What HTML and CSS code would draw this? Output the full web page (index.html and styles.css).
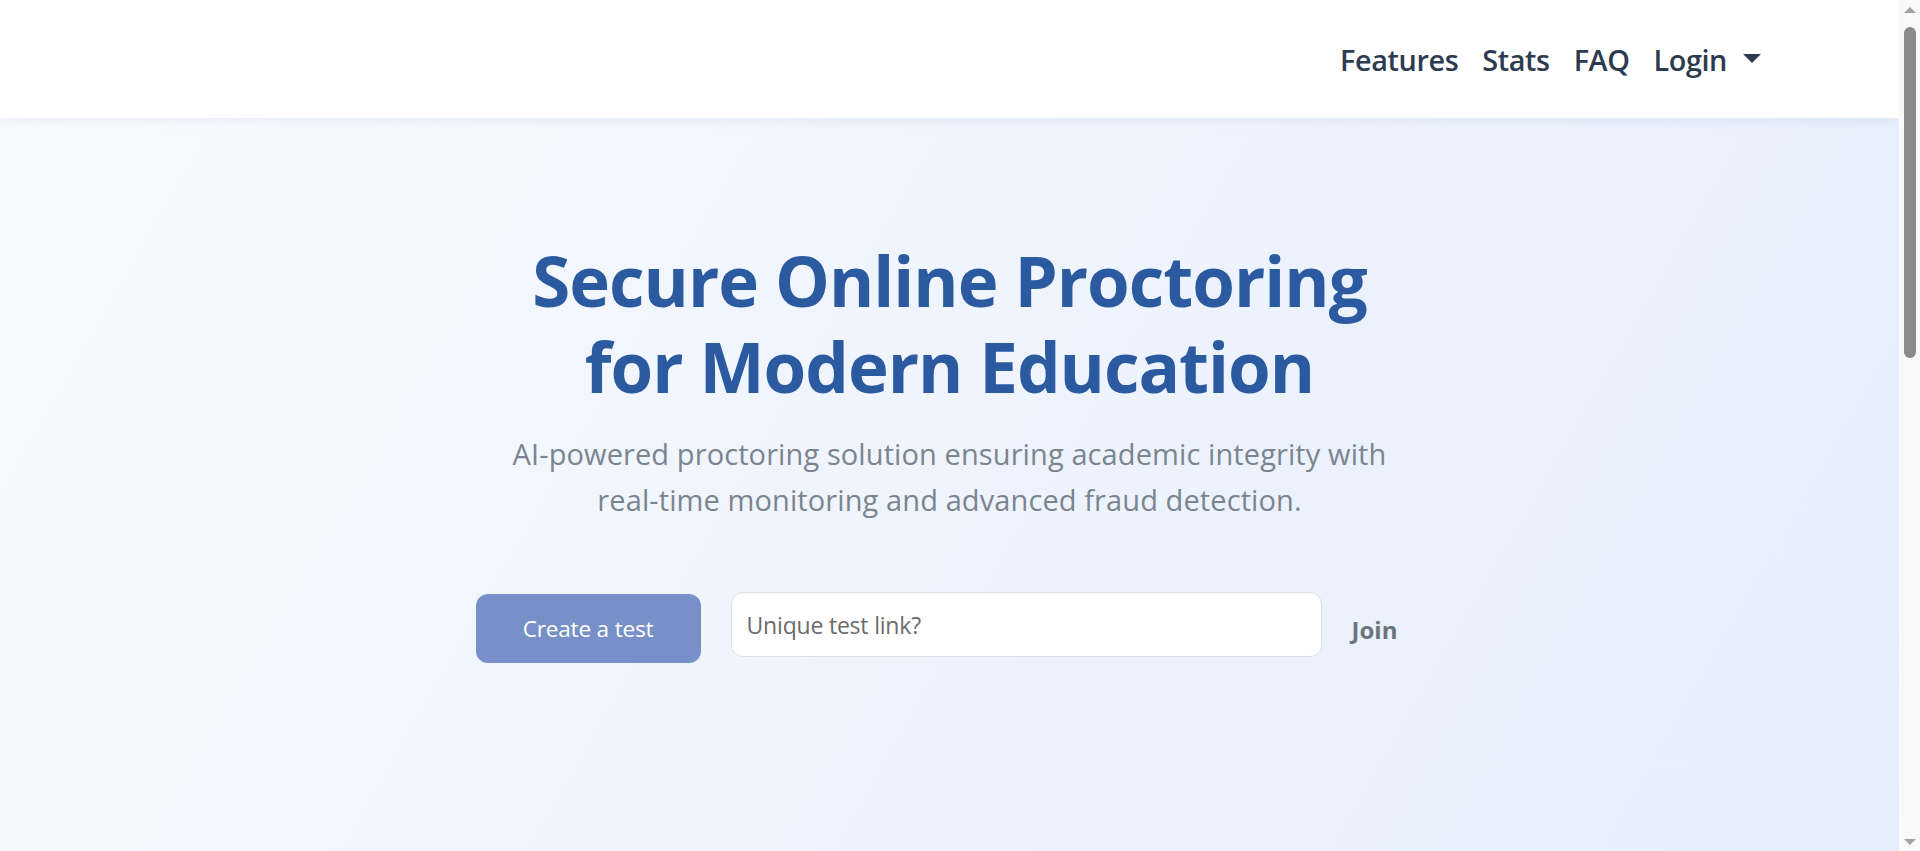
FILE: index.html
```html
<!DOCTYPE html>
<html lang="en">
<head>
<meta charset="utf-8">
<title>Secure Online Proctoring</title>
<link rel="stylesheet" href="styles.css">
</head>
<body>
<header class="navbar">
  <nav class="nav-inner">
    <a class="nav-link" href="#features">Features</a>
    <a class="nav-link" href="#stats">Stats</a>
    <a class="nav-link" href="#faq">FAQ</a>
    <a class="nav-link dropdown-toggle" href="#login">Login</a>
  </nav>
</header>
<main>
  <section class="hero">
    <h1 class="hero-title">Secure Online Proctoring<br>for Modern Education</h1>
    <p class="hero-sub">AI-powered proctoring solution ensuring academic integrity with real-time monitoring and advanced fraud detection.</p>
    <div class="actions">
      <button class="btn-create" type="button">Create a test</button>
      <input class="link-input" type="text" placeholder="Unique test link?">
      <button class="btn-join" type="button">Join</button>
    </div>
  </section>
  <section class="section" id="features">
    <h2 class="section-title">Features</h2>
    <div class="cards">
      <div class="card"><h3>Live monitoring</h3><p>Webcam and screen supervision in real time.</p></div>
      <div class="card"><h3>Fraud detection</h3><p>AI flags suspicious behaviour automatically.</p></div>
      <div class="card"><h3>Easy setup</h3><p>Create a test and share a unique link.</p></div>
    </div>
  </section>
  <section class="section" id="stats">
    <h2 class="section-title">Stats</h2>
    <div class="cards">
      <div class="card"><h3>10k+</h3><p>Tests proctored</p></div>
      <div class="card"><h3>99.9%</h3><p>Uptime</p></div>
      <div class="card"><h3>500+</h3><p>Institutions</p></div>
    </div>
  </section>
  <section class="section" id="faq">
    <h2 class="section-title">FAQ</h2>
    <div class="faq-list">
      <div class="card"><h3>How do I create a test?</h3><p>Click "Create a test" and follow the steps.</p></div>
      <div class="card"><h3>How do students join?</h3><p>Paste the unique test link and press Join.</p></div>
    </div>
  </section>
</main>
<div class="scrollbar" aria-hidden="true">
  <span class="sb-arrow sb-up"></span>
  <span class="sb-thumb"></span>
  <span class="sb-arrow sb-down"></span>
</div>
</body>
</html>
```
FILE: styles.css
```css
* { box-sizing: border-box; }
html, body { padding: 0; }
html { margin: 0; }
body {
  margin: 0 21px 0 0;
  font-family: "Open Sans", "Noto Sans", sans-serif;
  background: #f3f6fd;
  color: #2c3e50;
}
.navbar {
  height: 118px;
  background: #ffffff;
  box-shadow: 0 2px 12px rgba(30, 60, 120, 0.07);
  position: relative;
  z-index: 2;
}
.nav-inner {
  height: 100%;
  display: flex;
  justify-content: flex-end;
  align-items: center;
  gap: 24px;
  padding-right: 138px;
  padding-top: 1px;
}
.nav-link {
  color: #2c3b4f;
  text-decoration: none;
  font-size: 28.8px;
  font-weight: 600;
  letter-spacing: -0.4px;
}
.dropdown-toggle {
  display: flex;
  align-items: center;
}
.dropdown-toggle::after {
  content: "";
  display: inline-block;
  margin-left: 16px;
  border-top: 9px solid #2c3b4f;
  border-left: 9px solid transparent;
  border-right: 9px solid transparent;
  margin-top: -2px;
}
.hero {
  height: 1000px;
  background: linear-gradient(120deg, #f8faff 0%, #eff4fd 45%, #e4edfc 100%);
  display: flex;
  flex-direction: column;
  align-items: center;
  padding-top: 119px;
}
.hero-title {
  margin: 0;
  text-align: center;
  color: #2c5aa0;
  font-size: 69px;
  font-weight: 700;
  line-height: 86px;
  letter-spacing: -1px;
}
.hero-sub {
  margin: 22px 0 0;
  max-width: 900px;
  text-align: center;
  color: #7b8590;
  font-size: 29px;
  line-height: 46px;
  letter-spacing: 0.1px;
}
.actions {
  display: flex;
  align-items: flex-start;
  margin-top: 69px;
  margin-left: -6px;
}
.btn-create {
  width: 225px;
  height: 69px;
  margin-top: 2px;
  border: none;
  border-radius: 12px;
  background: #7890c8;
  color: #ffffff;
  font-family: inherit;
  font-size: 22.6px;
  letter-spacing: -0.2px;
}
.link-input {
  width: 591px;
  height: 65px;
  margin-left: 30px;
  border: 1px solid #dcdfe5;
  border-radius: 12px;
  background: #ffffff;
  padding: 0 15px;
  font-family: inherit;
  font-size: 23px;
  color: #333;
}
.link-input::placeholder { color: #6b6b6b; letter-spacing: -0.2px; }
.btn-join {
  height: 69px;
  margin-left: 10px;
  padding: 6px 20px 0;
  border: none;
  background: transparent;
  color: #6c757d;
  font-family: inherit;
  font-size: 24px;
  font-weight: 700;
}
.section {
  padding: 100px 300px;
  min-height: 800px;
  background: #ffffff;
}
.section:nth-child(odd) { background: #f6f8fc; }
.section-title {
  margin: 0 0 40px;
  text-align: center;
  color: #2c5aa0;
  font-size: 44px;
}
.cards {
  display: grid;
  grid-template-columns: repeat(3, 1fr);
  gap: 30px;
}
.faq-list {
  display: flex;
  flex-direction: column;
  gap: 20px;
}
.card {
  background: #ffffff;
  border: 1px solid #e3e8f0;
  border-radius: 12px;
  padding: 30px;
}
.card h3 { margin: 0 0 10px; color: #2c3b4f; font-size: 24px; }
.card p { margin: 0; color: #6c757d; font-size: 18px; }

.scrollbar {
  position: fixed;
  top: 0;
  right: 0;
  width: 21px;
  height: 100vh;
  background: #f9f9f9;
  z-index: 10;
  display: flex;
  flex-direction: column;
  align-items: center;
}
.sb-arrow {
  width: 0;
  height: 0;
  border-left: 6px solid transparent;
  border-right: 6px solid transparent;
}
.sb-up {
  margin-top: 7px;
  border-bottom: 6px solid #a3a3a3;
}
.sb-down {
  margin-top: auto;
  margin-bottom: 6px;
  border-top: 6px solid #a3a3a3;
}
.sb-thumb {
  margin-top: 14px;
  width: 12px;
  height: 331px;
  border-radius: 6px;
  background: #8a8a8a;
}
```
